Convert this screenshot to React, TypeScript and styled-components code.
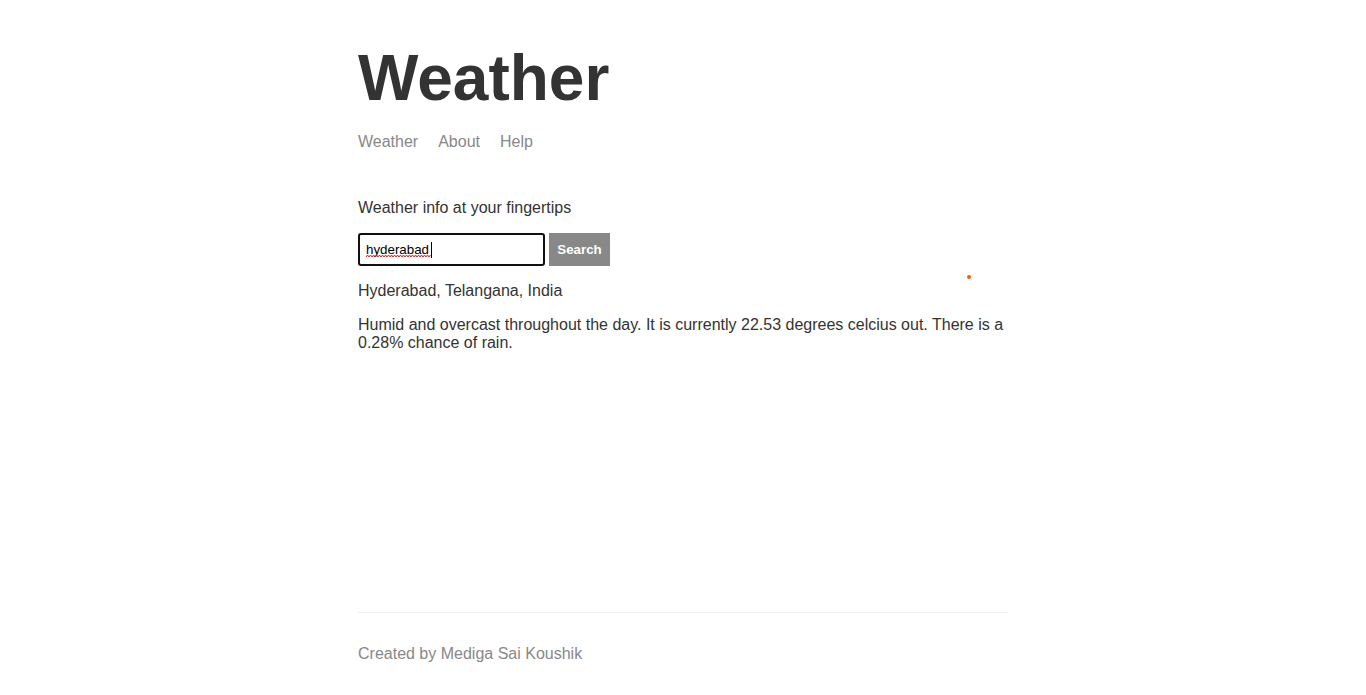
import styled, { createGlobalStyle } from 'styled-components';

const Global = createGlobalStyle`
    body {
        margin: 0;
        color: #333333;
        font-family: 'Liberation Sans', Arial, sans-serif;
        background: #ffffff;
    }
`

const App = () => {
    return (
        <>
        <Global/>
        <Page>
            <Header>
                <Title>Weather</Title>
                <Nav>
                    <NavLink href="#">Weather</NavLink>
                    <NavLink href="#">About</NavLink>
                    <NavLink href="#">Help</NavLink>
                </Nav>
            </Header>
            <Main>
                <Text>Weather info at your fingertips</Text>
                <Form onSubmit={(e) => e.preventDefault()}>
                    <Field>
                        <Input defaultValue="hyderabad" spellCheck={false}/>
                        <Squiggle width="65" height="4" viewBox="0 0 65 4">
                            <path d="M0 3 L1.5 1 L3 3 L4.5 1 L6 3 L7.5 1 L9 3 L10.5 1 L12 3 L13.5 1 L15 3 L16.5 1 L18 3 L19.5 1 L21 3 L22.5 1 L24 3 L25.5 1 L27 3 L28.5 1 L30 3 L31.5 1 L33 3 L34.5 1 L36 3 L37.5 1 L39 3 L40.5 1 L42 3 L43.5 1 L45 3 L46.5 1 L48 3 L49.5 1 L51 3 L52.5 1 L54 3 L55.5 1 L57 3 L58.5 1 L60 3 L61.5 1 L63 3 L64.5 1" fill="none" stroke="#e0201c" strokeWidth="1"/>
                        </Squiggle>
                        <Caret/>
                    </Field>
                    <Button type="submit">Search</Button>
                </Form>
                <Text>Hyderabad, Telangana, India</Text>
                <Text>Humid and overcast throughout the day. It is currently 22.53 degrees celcius out. There is a 0.28% chance of rain.</Text>
            </Main>
            <Footer>
                <Text>Created by Mediga Sai Koushik</Text>
            </Footer>
        </Page>
        <Dot/>
        </>
    )
}

export default App;

const Page = styled.div`
    max-width: 650px;
    margin: 0 auto;
    padding: 0 16px;
    min-height: 100vh;
    display: flex;
    flex-direction: column;
`

const Header = styled.header`
    margin-bottom: 48px;
`

const Title = styled.h1`
    font-size: 64px;
    line-height: 74px;
    font-weight: bold;
    margin: 41px 0 18px;
`

const Nav = styled.nav`
    display: flex;
    gap: 20px;
    font-size: 16px;
    line-height: 18px;
`

const NavLink = styled.a`
    color: #888888;
    text-decoration: none;
`

const Main = styled.main`
    flex-grow: 1;
`

const Text = styled.p`
    font-size: 16px;
    line-height: 18px;
    margin: 0 0 16px;
`

const Form = styled.form`
    display: flex;
    gap: 4px;
    margin-bottom: 16px;
`

const Field = styled.div`
    position: relative;
    display: flex;
`

const Input = styled.input`
    box-sizing: border-box;
    width: 187px;
    height: 33px;
    padding: 0 6px;
    border: 2px solid #101010;
    border-radius: 3px;
    font-family: 'Liberation Sans', Arial, sans-serif;
    font-size: 13.33px;
    color: #000000;
    outline: none;
    caret-color: transparent;
`

const Squiggle = styled.svg`
    position: absolute;
    left: 8px;
    top: 21px;
    pointer-events: none;
`

const Caret = styled.span`
    position: absolute;
    left: 73px;
    top: 9px;
    width: 1px;
    height: 16px;
    background: #000000;
`

const Button = styled.button`
    box-sizing: border-box;
    width: 61px;
    height: 33px;
    border: 1px solid #888888;
    background: #888888;
    color: #ffffff;
    font-family: 'Liberation Sans', Arial, sans-serif;
    font-size: 13.33px;
    font-weight: bold;
    padding: 0;
    cursor: pointer;
`

const Footer = styled.footer`
    color: #888888;
    border-top: 1px solid #eeeeee;
    padding: 16px 0 0;
    & > p {
        margin: 16px 0;
        padding-bottom: 16px;
    }
`

const Dot = styled.div`
    position: absolute;
    left: 967px;
    top: 275px;
    width: 4px;
    height: 4px;
    border-radius: 50%;
    background: #ff5a00;
`
